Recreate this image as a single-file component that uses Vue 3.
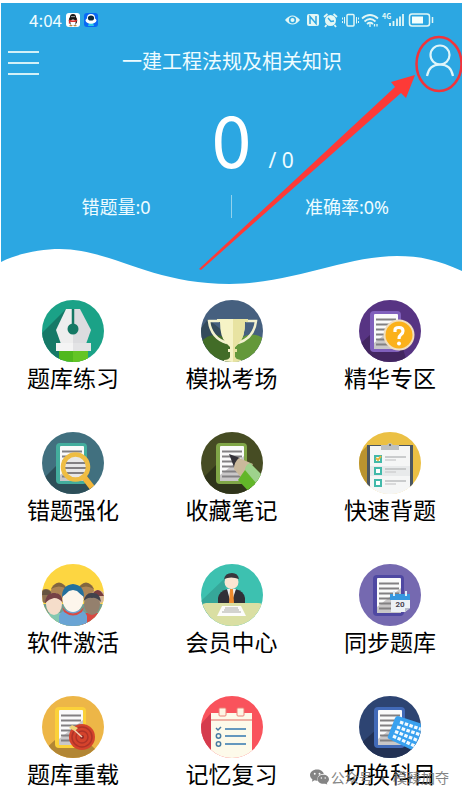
<template>
  <div class="page">
    <!-- 顶部区域 -->
    <header class="header">
      <!-- 状态栏 -->
      <div class="status-bar">
        <span class="time">4:04</span>
        <svg class="app-icon" viewBox="0 0 14 14">
          <rect width="14" height="14" rx="3" fill="#fff" />
          <ellipse cx="7" cy="7.5" rx="4.2" ry="5" fill="#171515" />
          <circle cx="7" cy="4" r="3" fill="#171515" />
          <ellipse cx="7" cy="9.5" rx="2.6" ry="3" fill="#fff" />
          <path d="M3 6.4Q7 8.4 11 6.4L11 8.2Q7 9.8 4 8.4V10.5H2.8Z" fill="#d9302b" />
          <path d="M3.5 12.6H6M8 12.6H10.5" stroke="#c08a3a" stroke-width="1.2" />
          <circle cx="6" cy="3.6" r=".7" fill="#fff" />
          <circle cx="8" cy="3.6" r=".7" fill="#fff" />
        </svg>
        <svg class="app-icon" viewBox="0 0 14 14">
          <rect width="14" height="14" rx="3" fill="#0869f5" />
          <path d="M5 10L4 13H10L9 10Z" fill="#2bc6e8" />
          <ellipse cx="7" cy="7.6" rx="5.4" ry="3.2" fill="#fff" />
          <circle cx="7" cy="5" r="4" fill="#fff" />
          <ellipse cx="7" cy="5" rx="3.1" ry="2.6" fill="#102a38" />
        </svg>
        <svg class="status-icons" viewBox="0 0 150 18">
          <!-- 护眼 -->
          <path d="M1 9Q8.5 0 16 9Q8.5 18 1 9Z" fill="#e3f7f5" />
          <circle cx="8.5" cy="9" r="3.6" fill="#2ca7e2" />
          <circle cx="8.5" cy="9" r="2" fill="#e3f7f5" />
          <!-- NFC -->
          <rect x="23" y="3" width="12" height="12" rx="2" fill="#e3f7f5" />
          <path d="M26 13V5.5L32 12.5V5" fill="none" stroke="#2ca7e2" stroke-width="1.5" />
          <!-- 闹钟 -->
          <circle cx="46.5" cy="9.5" r="5.5" fill="#e3f7f5" />
          <path d="M40 6L43.5 3M49.5 3L53 6M42.5 14L41 16M50.5 14L52 16" stroke="#e3f7f5" stroke-width="1.8" />
          <path d="M44 7L47 10.5L50 10" fill="none" stroke="#2ca7e2" stroke-width="1.3" />
          <!-- 振动 -->
          <rect x="63" y="3.5" width="7" height="11.5" rx="1" fill="none" stroke="#e3f7f5" stroke-width="1.5" />
          <path d="M60.5 6V12.5M72.500 6V12.500M58.500 6.500V8.500M58.500 10V12M74.500 6.500V8.500M74.500 10V12" stroke="#e3f7f5" />
          <!-- WiFi -->
          <g fill="none" stroke="#e3f7f5" stroke-width="1.8">
            <path d="M78 7.500Q86 .5 94 7.500" />
            <path d="M80.500 10.500Q86 5.500 91.500 10.500" />
            <path d="M83 13Q86 10.500 89 13" />
          </g>
          <path d="M86 13V16M90.500 13V15.500M93 13V15.500" stroke="#e3f7f5" stroke-width="1.3" />
          <!-- 信号 -->
          <text x="98" y="8" class="net">4G</text>
          <path d="M106 12V15M109.500 10V15M113 7.500V15M116 5.500V15M119 3V15" stroke="#e3f7f5" stroke-width="1.8" />
          <!-- 电池 -->
          <rect x="125.500" y="3" width="20" height="12" rx="2.500" fill="none" stroke="#e3f7f5" stroke-width="1.5" />
          <rect x="128" y="5.500" width="11" height="7" fill="#f3fffd" />
          <path d="M148.500 6V12" stroke="#e3f7f5" stroke-width="1.5" />
        </svg>
      </div>

      <!-- 标题栏 -->
      <div class="nav-bar">
        <button class="menu-btn" type="button" aria-label="菜单">
          <span class="line"></span>
          <span class="line"></span>
          <span class="line"></span>
        </button>
        <h1 class="title">一建工程法规及相关知识</h1>
        <button class="user-btn" type="button" aria-label="我的">
          <svg viewBox="0 0 30 34" fill="none" stroke="#dff5fa" stroke-width="2.2">
            <circle cx="15" cy="11" r="9.5" />
            <path d="M2 32Q4 20.500 15 20.500Q26 20.500 28 32" />
          </svg>
        </button>
      </div>

      <!-- 做题进度 -->
      <div class="progress">
        <span class="done">0</span>
        <span class="total">/ 0</span>
      </div>

      <div class="stats">
        <span class="stat">错题量:0</span>
        <span class="stat-divider"></span>
        <span class="stat">准确率:0%</span>
      </div>

      <!-- 指引箭头 -->
      <svg class="guide" viewBox="0 0 270 270">
        <path d="M7 266L203 84L199 79L223 72L214 95L209 90L9 267Z" fill="#fd3a37" />
        <ellipse cx="247" cy="61" rx="22.500" ry="27" fill="none" stroke="#f0343b" stroke-width="2.500" />
      </svg>
    </header>
    <svg class="wave" viewBox="0 0 462 40" preserveAspectRatio="none">
      <path d="M0 0H462V25C438 14 420 10 397 10C345 10 290 38 229 38C150 38 110 3 59 3C40 3 18 7 0 16Z" fill="#2ca7e2" />
    </svg>

    <!-- 功能菜单 -->
    <main class="menu">
      <button v-for="item in menus" :key="item.name" class="menu-item" type="button">
        <svg class="menu-icon" viewBox="0 0 62 62" v-html="item.icon"></svg>
        <span class="menu-name">{{ item.name }}</span>
      </button>
    </main>

    <!-- 公众号水印 -->
    <div class="watermark">
      <svg class="wechat" viewBox="0 0 20 16">
        <path d="M7.500 0C3 0 0 2.600 0 6C0 8 1 9.500 2.600 10.600L2 13L4.800 11.500Q6 12 8 11.900C7 8 10 4.600 14.600 4.600C14 2 11 0 7.500 0Z" fill="#777" />
        <path d="M14 5.500C10.500 5.500 8 7.700 8 10.400C8 13.200 10.500 15.200 14 15.200L16 15L18.200 16L17.700 14.200C19 13.300 20 12 20 10.400C20 7.700 17.400 5.500 14 5.500Z" fill="#777" />
        <g fill="#fff">
          <circle cx="5" cy="4.500" r="1" />
          <circle cx="10" cy="4.500" r="1" />
          <circle cx="12" cy="9" r=".8" />
          <circle cx="16" cy="9" r=".8" />
        </g>
      </svg>
      <span>公众号 · 模臻加夺</span>
    </div>
  </div>
</template>

<script setup>
// ==================== 图标公共部分 ====================
/**
 * 生成带边框的试卷图形
 * @param {string} frame 边框颜色
 * @param {number} x 左侧位置
 */
const paper = (frame, x = 14) => `
  <rect x="${x}" y="11" width="31" height="41" rx="4" fill="${frame}"/>
  <rect x="${x + 4}" y="14" width="24" height="35" rx="1" fill="#fafafa"/>
  <path d="M${x + 4} 49V43L${x + 28} 24V49Z" fill="#c9c7c8"/>
  <path d="M${x + 6} 19.500H${x + 26}M${x + 6} 24.500H${x + 26}M${x + 6} 29.500H${x + 26}M${x + 6} 34.500H${x + 26}M${x + 6} 39.500H${x + 26}M${x + 6} 44.500H${x + 26}" stroke="#828082" stroke-width="2"/>`

// 圆形底色
const bg = (color) => `<rect width="62" height="62" fill="${color}"/>`

// ==================== 菜单数据 ====================
const menus = [
  {
    name: '题库练习',
    icon: `${bg('#1ba287')}
      <path d="M24 9L0 33V62H20Z" fill="#167967"/>
      <path d="M17 50H46V62H17Z" fill="#50b81d"/><path d="M31 50H46V62H31Z" fill="#64c525"/>
      <path d="M24 9H31V44H19L14 30Z" fill="#eee"/><path d="M31 9H38L49 30L44 44H31Z" fill="#dcdcdf"/>
      <rect x="14" y="43" width="35" height="8" fill="#f4f4f4"/><rect x="31" y="43" width="18" height="8" fill="#e3e3e5"/>
      <path d="M31 9V29" stroke="#147864" stroke-width="2.500"/><circle cx="31" cy="29" r="5.500" fill="#147864"/>`
  },
  {
    name: '模拟考场',
    icon: `${bg('#46607f')}
      <path d="M7 19L0 28V45L28 60V36Z" fill="#344b5c"/>
      <path d="M0 42Q12 28 31 42V62H0Z" fill="#426c27"/>
      <path d="M31 46Q46 28 62 38V62H31Z" fill="#64983a"/>
      <path d="M18 21H8Q10 38 26 43M45 21H55Q53 38 37 43" fill="none" stroke="#f3f1cf" stroke-width="2.500"/>
      <path d="M16 19H47V22H44Q44 37 38 43L34 47V49H36V52H34V57Q35 60 40 60V62H23V60Q28 60 29 57V52H27V49H29V47L25 43Q19 37 19 22H16Z" fill="#f6f3c6"/>
      <path d="M32 19H47V22H44Q44 37 38 43L34 47V49H36V52H34V57Q35 60 40 60V62H32Z" fill="#e8e3a2"/>`
  },
  {
    name: '精华专区',
    icon: `${bg('#573483')}
      <path d="M12 34L0 45V62H48L44 49Z" fill="#432661"/>
      ${paper('#8060bc', 11)}
      <circle cx="40" cy="35" r="15.500" fill="#f1dfbf"/><circle cx="40" cy="35" r="13.500" fill="#fbb11b"/>
      <path d="M36 32V30Q36 27.500 40 27.500Q44 27.500 44 31Q44 33 42 34.500Q40 36 40 39" fill="none" stroke="#fff" stroke-width="3.200"/>
      <circle cx="40" cy="43.500" r="2" fill="#fff"/>`
  },
  {
    name: '错题强化',
    icon: `${bg('#41707f')}
      <path d="M16 32L0 48V62H54L46 45Z" fill="#2d4f59"/>
      ${paper('#43ad9d', 14)}
      <path d="M42 45L52 58" stroke="#f3b73b" stroke-width="6"/>
      <circle cx="33.500" cy="35" r="12.500" fill="#e8e8e8"/>
      <path d="M24 31H43M23 36H44M25 41H42" stroke="#828082" stroke-width="2"/>
      <circle cx="33.500" cy="35" r="12.500" fill="none" stroke="#eebd43" stroke-width="4.500"/>`
  },
  {
    name: '收藏笔记',
    icon: `${bg('#464c23')}
      <path d="M16 32L0 48V62H54L46 45Z" fill="#2f341a"/>
      ${paper('#80a647', 15)}
      <path d="M28 22L39 26L33 35Z" fill="#343239"/>
      <path d="M38 26L52 32L42 48L33 37Q33 30 38 26Z" fill="#cab99b"/>
      <path d="M49 31L62 45V54L52 64L37 48L44 38Z" fill="#62b629"/>
      <path d="M49 31L62 44V50L55 51L44 38Q44 33 49 31Z" fill="#9ed28c"/>`
  },
  {
    name: '快速背题',
    icon: `${bg('#ebc044')}
      <path d="M9 13L0 22V54H9Z" fill="#b9932f"/>
      <path d="M0 54H62V62H0Z" fill="#fff"/>
      <path d="M8 13H54V55H8Z" fill="#4b5661"/>
      <path d="M11 14H51V62H11Z" fill="#f5f6f6"/><path d="M11 34H51V44H11Z" fill="#e8eaeb"/>
      <path d="M22 13H28Q31 9 34 13H40V18H22Z" fill="#bdc0c2"/><circle cx="31" cy="13" r="1" fill="#555"/>
      <path d="M16 24H22V30H16ZM16 36H22V42H16ZM16 48H22V54H16Z" fill="#fff" stroke="#42b9aa" stroke-width="2"/>
      <path d="M17 26L19 28L22 24" fill="none" stroke="#e6b73a" stroke-width="2"/>
      <path d="M26 25H47M26 37H47M26 49H47" stroke="#bcbec0" stroke-width="1.500"/>
      <path d="M26 28H37M26 40H37M26 52H37" stroke="#cfd1d2" stroke-width="1.500"/>`
  },
  {
    name: '软件激活',
    icon: `${bg('#fdd641')}
      <path d="M0 40H62V62H0Z" fill="#709e91"/>
      <circle cx="4" cy="32" r="7" fill="#8f7252"/><path d="M-3 31Q4 20 11 31Z" fill="#665441"/>
      <circle cx="17" cy="27" r="8" fill="#ad8556"/><path d="M9 25Q17 12 25 25Q17 20 9 25Z" fill="#826640"/>
      <circle cx="44" cy="27" r="8" fill="#ad8556"/><path d="M36 25Q44 12 52 25Q44 20 36 25Z" fill="#826640"/>
      <circle cx="56" cy="33" r="7" fill="#d6b79a"/><path d="M49 32Q56 20 62 32Z" fill="#783d3f"/>
      <path d="M0 62V49H25V62Z" fill="#83c8b0"/><path d="M40 62V49H62V62Z" fill="#d94842"/>
      <ellipse cx="12" cy="40" rx="8" ry="11" fill="#f5ddca"/><path d="M3 39Q4 28 12 29Q20 28 21 39Q17 34 12 34Q7 35 3 39Z" fill="#754146"/>
      <ellipse cx="50" cy="40" rx="8" ry="11" fill="#94806d"/><path d="M41 38Q44 28 50 29Q58 28 59 38Q54 33 50 34Q45 33 41 38Z" fill="#41424c"/>
      <path d="M17 62V52Q19 45 31 45Q43 45 45 52V62Z" fill="#6aa4d4"/>
      <path d="M20 43Q31 56 42 43L40 48Q31 55 22 48Z" fill="#d84a43"/>
      <ellipse cx="31" cy="35" rx="10.500" ry="13" fill="#fdf6ec"/>
      <path d="M20 33Q20 21 31 20Q42 21 42 33Q38 30 35 27L31 26L27 27Q24 30 20 33Z" fill="#24709d"/>`
  },
  {
    name: '会员中心',
    icon: `${bg('#3dc1b0')}
      <path d="M24 14L0 37V55H27Z" fill="#36a799"/>
      <path d="M17 40V34Q18 27 27 25H34Q43 27 44 34V40Z" fill="#303037"/>
      <path d="M26 25L30 40L35 25Z" fill="#edf3f7"/><path d="M29 25H32L33 39H28Z" fill="#ee8b2e"/>
      <ellipse cx="30.500" cy="18" rx="7" ry="7" fill="#fae5d2"/><path d="M23 15Q24 9 31 9Q37 9 38 15Q30 12 23 15Z" fill="#39373d"/>
      <path d="M0 42Q2 39 5 39H57Q62 39 62 43V62H0Z" fill="#dadfa3"/>
      <path d="M21 42H40L45 52H16Z" fill="#fcfcfa"/>
      <path d="M24 44H37M23 46H38M21 48H40" stroke="#a9aaa4" stroke-width="1.200"/>`
  },
  {
    name: '同步题库',
    icon: `${bg('#7569b0')}
      ${paper('#4f48a2', 14)}
      <path d="M32 33H51V44L46 48H32Z" fill="#edf1f6"/><path d="M46 48V44H51Z" fill="#b8bdcb"/>
      <rect x="31" y="30" width="20" height="6" fill="#3697df"/>
      <path d="M35 27V32M47 27V32" stroke="#deedf5" stroke-width="2"/>
      <text x="41" y="43" text-anchor="middle" font-size="8" font-weight="700" font-family="Roboto, sans-serif" fill="#4a4550">20</text>`
  },
  {
    name: '题库重载',
    icon: `${bg('#edb647')}
      <path d="M14 43L0 56V62H62L46 46Z" fill="#b28634"/>
      ${paper('#fbd13a', 13)}
      <circle cx="40" cy="41" r="13" fill="#d4432c"/>
      <g fill="none" stroke="#ae3328" stroke-width="1.500"><circle cx="40" cy="41" r="10"/><circle cx="40" cy="41" r="6"/></g>
      <circle cx="40" cy="41" r="2" fill="#912a28"/>
      <path d="M30 32L40 41" stroke="#f1d3b7" stroke-width="1.500"/>
      <path d="M27 32L33 35L36 32L30 29Z" fill="#eed47a"/>`
  },
  {
    name: '记忆复习',
    icon: `${bg('#f9535c')}
      <path d="M10 17L0 28V46L10 58Z" fill="#d53b4d"/>
      <path d="M10 17H51V62H10Z" fill="#fdfaea"/>
      <path d="M10 24H51" stroke="#e99a8e" stroke-width="1.500"/>
      <rect x="18" y="12" width="7" height="8" rx="1" fill="#fdf5e4" stroke="#ea8076"/>
      <rect x="36" y="12" width="7" height="8" rx="1" fill="#fdf5e4" stroke="#ea8076"/>
      <path d="M24 33H45M24 40H45M24 48H45" stroke="#6598be" stroke-width="1.800"/>
      <path d="M15 32L17 34L20 31" fill="none" stroke="#497ca2" stroke-width="1.500"/>
      <g fill="none" stroke="#497ca2" stroke-width="1.500"><circle cx="17.500" cy="40" r="2.200"/><circle cx="17.500" cy="48" r="2.200"/></g>`
  },
  {
    name: '切换科目',
    icon: `${bg('#2d4472')}
      <path d="M18 33L0 49V62H62L46 46Z" fill="#223154"/>
      ${paper('#426ab8', 15)}
      <path d="M39 20Q37 20 36 22L29 40Q28 42 30 43L55 55L67 29Z" fill="#39a1ef"/>
      <g stroke="#f3fbff" stroke-width="3.200" stroke-dasharray="3.500 1.500">
        <path d="M41 26L64 34"/><path d="M38 31L62 39"/><path d="M36 35.500L60 45"/><path d="M34 40L58 51"/>
      </g>`
  }
]
</script>

<style>
body {
  background: #fff;
}
</style>

<style scoped>
.page {
  position: relative;
  padding: 3px 1px 0;
  font-family: 'Noto Sans CJK SC', sans-serif;
}

button {
  padding: 0;
  border: none;
  background: none;
  font-family: inherit;
  cursor: pointer;
}

/* 顶部区域 */
.header {
  position: relative;
  height: 243px;
  background: #2ca7e2;
  color: #effcff;
}

/* 状态栏 */
.status-bar {
  display: flex;
  align-items: center;
  gap: 4px;
  height: 34px;
  padding: 0 28px;
}

.time {
  font-size: 17px;
  line-height: 24px;
}

.app-icon {
  width: 14px;
  height: 14px;
}

.status-icons {
  width: 150px;
  height: 18px;
  margin-left: auto;
}

.net {
  font-size: 7px;
  font-weight: 700;
  fill: #e3f7f5;
}

/* 标题栏 */
.nav-bar {
  display: flex;
  align-items: center;
  justify-content: space-between;
  height: 48px;
  padding: 0 7px;
}

.menu-btn {
  display: flex;
  flex-direction: column;
  gap: 9px;
  width: 31px;
  padding-top: 4px;
}

.line {
  height: 2px;
  background: #d4f1f7;
}

.title {
  margin: 0;
  font-size: 20px;
  font-weight: 400;
  line-height: 30px;
}

.user-btn {
  width: 30px;
  height: 34px;
}

.user-btn svg {
  display: block;
  width: 100%;
}

/* 做题进度 */
.progress {
  display: grid;
  grid-template-columns: 1fr auto 1fr;
  align-items: baseline;
  height: 104px;
  line-height: 104px;
}

.done {
  grid-column: 2;
  font-size: 72px;
  color: #fff;
}

.total {
  padding-left: 17px;
  font-family: 'Noto Sans', sans-serif;
  font-size: 21px;
}

/* 统计数据 */
.stats {
  display: flex;
  align-items: center;
  height: 34px;
  font-family: 'Noto Sans', 'Noto Sans CJK SC', sans-serif;
  font-size: 18px;
}

.stat {
  flex: 1;
  text-align: center;
}

.stat-divider {
  width: 1px;
  height: 23px;
  background: #93d2ec;
}

/* 指引箭头 */
.guide {
  position: absolute;
  top: 0;
  right: 0;
  width: 270px;
  height: 270px;
  z-index: 1;
  pointer-events: none;
}

.wave {
  display: block;
  width: 100%;
  height: 40px;
}

/* 功能菜单 */
.menu {
  display: grid;
  grid-template-columns: repeat(3, 92px);
  justify-content: space-between;
  row-gap: 40px;
  padding: 14px 26px 0;
}

.menu-item {
  display: flex;
  flex-direction: column;
  align-items: center;
  color: #000;
}

.menu-icon {
  width: 62px;
  height: 62px;
  border-radius: 50%;
  overflow: hidden;
}

.menu-name {
  font-size: 23px;
  line-height: 30px;
  white-space: nowrap;
}

/* 水印 */
.watermark {
  position: absolute;
  right: 14px;
  bottom: 0;
  display: flex;
  align-items: center;
  gap: 2px;
  font-size: 14px;
  line-height: 22px;
  color: #777;
  opacity: 0.9;
}

.wechat {
  width: 19px;
  height: 16px;
}
</style>
